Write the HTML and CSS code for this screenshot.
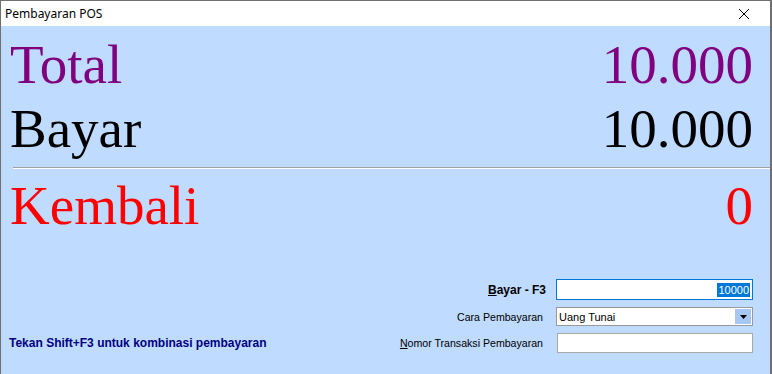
FILE: index.html
```html
<!DOCTYPE html>
<html lang="id">
<head>
    <meta charset="UTF-8">
    <meta name="viewport" content="width=device-width, initial-scale=1.0">
    <title>Pembayaran POS</title>
    <link rel="stylesheet" href="styles.css">
</head>
<body>
    <div class="window">
        <div class="titlebar">
            <span class="title">Pembayaran POS</span>
            <svg class="close" width="12" height="12" viewBox="0 0 12 12">
                <path d="M1 1 L11 11 M11 1 L1 11" stroke="#000" stroke-width="1" fill="none"/>
            </svg>
        </div>

        <div class="content">
            <div class="summary">
                <div class="row total"><span>Total</span><span>10.000</span></div>
                <div class="row bayar"><span>Bayar</span><span>10.000</span></div>
                <div class="divider"></div>
                <div class="row kembali"><span>Kembali</span><span>0</span></div>
            </div>

            <div class="bottom">
                <p class="hint">Tekan Shift+F3 untuk kombinasi pembayaran</p>
                <div class="form">
                    <label class="label strong"><u>B</u>ayar - F3</label>
                    <div class="field focused"><span class="selected">10000</span></div>

                    <label class="label">Cara Pembayaran</label>
                    <div class="field combo">
                        <span class="combo-text">Uang Tunai</span>
                        <span class="combo-btn">
                            <svg width="7" height="4" viewBox="0 0 7 4"><path d="M0 0 H7 L3.5 4 Z" fill="#000"/></svg>
                        </span>
                    </div>

                    <label class="label"><u>N</u>omor Transaksi Pembayaran</label>
                    <div class="field plain"></div>
                </div>
            </div>
        </div>
    </div>
</body>
</html>
```

FILE: styles.css
```css
html, body {
    margin: 0;
    padding: 0;
}

body {
    width: 772px;
    height: 374px;
    overflow: hidden;
    background: #bfdbff;
}

.window {
    height: 374px;
    box-sizing: border-box;
    border: 1px solid #6f6f6f;
    border-bottom: none;
    border-right-width: 2px;
    display: flex;
    flex-direction: column;
    background: #bfdbff;
}

.titlebar {
    height: 25px;
    background: #fff;
    display: flex;
    align-items: center;
    justify-content: space-between;
    padding: 0 20px 0 4px;
    font-family: 'Noto Sans', sans-serif;
    font-size: 12px;
    color: #000;
}

.close {
    display: block;
}

.content {
    flex: 1;
    padding: 7px 17px 0 0;
    display: flex;
    flex-direction: column;
}

.row {
    display: flex;
    justify-content: space-between;
    font-family: 'Liberation Serif', 'Times New Roman', serif;
    font-size: 55px;
    line-height: 64px;
    padding-left: 9px;
}

.total {
    color: #800080;
}

.bayar {
    color: #000;
}

.kembali {
    color: #ff0000;
}

.divider {
    margin: 6px -17px 5px 12px;
    height: 1px;
    background: #a0a0a0;
    border-bottom: 1px solid #fff;
}

.bottom {
    display: flex;
    justify-content: space-between;
    align-items: flex-end;
    margin-top: 41px;
}

.hint {
    margin: 0 0 3px 8px;
    font-family: 'Liberation Sans', Arial, sans-serif;
    font-size: 12px;
    font-weight: bold;
    color: #000080;
}

.form {
    display: grid;
    grid-template-columns: auto 197px;
    column-gap: 10px;
    row-gap: 7px;
    align-items: center;
    font-family: 'Liberation Sans', Arial, sans-serif;
    font-size: 10.6px;
    color: #000;
}

.label {
    text-align: right;
    padding-right: 3px;
}

.label.strong {
    padding-right: 0;
    font-weight: bold;
    font-size: 12px;
}

.field {
    box-sizing: border-box;
    height: 20px;
    background: #fff;
    border: 1px solid #a8a8a8;
    display: flex;
    align-items: center;
    font-size: 11px;
}

.field.focused {
    height: 21px;
    border-color: #0078d7;
    justify-content: flex-end;
    padding-right: 2px;
}

.selected {
    background: #0078d7;
    color: #fff;
    line-height: 14px;
    padding: 0 1px;
}

.field.combo {
    height: 19px;
    border-color: #999;
    justify-content: space-between;
    padding: 1px;
}

.combo-text {
    padding-left: 1px;
}

.combo-btn {
    width: 16px;
    height: 15px;
    background: #a6c8f2;
    display: flex;
    align-items: center;
    justify-content: center;
}

.combo-btn svg {
    display: block;
}

.field.plain {
    margin-left: 1px;
    width: 196px;
}
```
